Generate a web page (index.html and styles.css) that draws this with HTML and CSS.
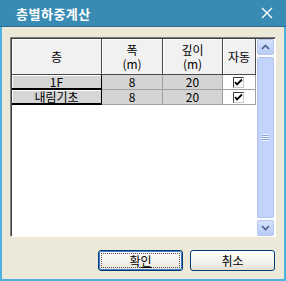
FILE: index.html
```html
<!DOCTYPE html>
<html>
<head>
<meta charset="utf-8">
<link rel="stylesheet" href="styles.css">
</head>
<body>
<div class="window">
  <div class="titlebar">
    <span class="title">층별하중계산</span>
    <svg class="close" width="12" height="12" viewBox="0 0 12 12"><path d="M1 1L11 11M11 1L1 11" stroke="#fff" stroke-width="1.4" fill="none"/></svg>
  </div>
  <div class="content">
    <div class="gridbox">
      <div class="table">
        <div class="hd">층</div>
        <div class="hd two"><span>폭</span><span>(m)</span></div>
        <div class="hd two"><span>깊이</span><span>(m)</span></div>
        <div class="hd">자동</div>

        <div class="rh">1F</div>
        <div class="cell">8</div>
        <div class="cell">20</div>
        <div class="cell chk"><span class="box"><svg width="9" height="9" viewBox="0 0 9 9"><path d="M1 4L3 6.5L8 1.5" stroke="#000" stroke-width="1.8" fill="none"/></svg></span></div>

        <div class="rh">내림기초</div>
        <div class="cell">8</div>
        <div class="cell">20</div>
        <div class="cell chk"><span class="box"><svg width="9" height="9" viewBox="0 0 9 9"><path d="M1 4L3 6.5L8 1.5" stroke="#000" stroke-width="1.8" fill="none"/></svg></span></div>
      </div>
      <div class="scroll">
        <div class="sbtn"><svg width="9" height="6" viewBox="0 0 9 6"><path d="M1 5L4.5 1.5L8 5" stroke="#4d6185" stroke-width="1.6" fill="none"/></svg></div>
        <div class="thumb"><span class="grip"></span></div>
        <div class="sbtn"><svg width="9" height="6" viewBox="0 0 9 6"><path d="M1 1L4.5 4.5L8 1" stroke="#4d6185" stroke-width="1.6" fill="none"/></svg></div>
      </div>
    </div>
    <div class="buttons">
      <button class="btn default"><span class="focus">확<u>인</u></span></button>
      <button class="btn">취소</button>
    </div>
  </div>
</div>
</body>
</html>
```
FILE: styles.css
```css
html, body {
  margin: 0;
  padding: 0;
  width: 286px;
  height: 281px;
  overflow: hidden;
  background: #ece9d8;
}
.window {
  width: 286px;
  height: 281px;
  box-sizing: border-box;
  display: flex;
  flex-direction: column;
  font-family: "Noto Sans CJK KR", "Noto Sans", sans-serif;
  font-size: 12px;
  color: #000;
}
.titlebar {
  height: 27px;
  flex: none;
  background: #3a8bb3;
  border-bottom: 1px solid #2c6e91;
  box-sizing: border-box;
  display: flex;
  align-items: center;
  justify-content: space-between;
  padding: 0 13px 0 16px;
}
.title {
  color: #fff;
  font-weight: bold;
  font-size: 13px;
  letter-spacing: 0.5px;
}
.close {
  display: block;
}
.content {
  flex: 1;
  background: #ece9d8;
  border-left: 2px solid #4cb3e0;
  border-right: 2px solid #4cb3e0;
  border-bottom: 2px solid #4cb3e0;
  padding: 10px 8px 0 8px;
  display: flex;
  flex-direction: column;
}
.gridbox {
  height: 200px;
  box-sizing: border-box;
  border-top: 1px solid #808080;
  border-left: 1px solid #808080;
  border-right: 1px solid #fff;
  border-bottom: 1px solid #fff;
  box-shadow: inset 1px 1px 0 #404040;
  padding: 1px 0 0 1px;
  background: #fff;
  display: flex;
  justify-content: space-between;
}
.table {
  display: grid;
  grid-template-columns: 90px 61px 60px 33px;
  grid-template-rows: 36px 15px 15px;
  align-self: flex-start;
}
.table > div {
  box-sizing: border-box;
  display: flex;
  align-items: center;
  justify-content: center;
  text-align: center;
  line-height: 14px;
}
.hd {
  background: #f1f1f1;
  border-right: 1px solid #4a4a4a;
  border-bottom: 1px solid #4a4a4a;
  box-shadow: inset 1px 1px 0 #fff;
}
.hd.two {
  flex-direction: column;
}
.hd.two span {
  display: block;
  height: 14px;
  line-height: 14px;
}
.rh {
  background: #d6d6d6;
  border-right: 1px solid #000;
  border-bottom: 2px solid #000;
  box-shadow: inset 1px 1px 0 #fff;
}
.cell {
  background: #d4d4d4;
  border-right: 1px solid #a0a0a0;
  border-bottom: 1px solid #a0a0a0;
}
.cell.chk {
  background: #fff;
  justify-content: flex-start;
  padding-left: 10px;
}
.box {
  width: 11px;
  height: 11px;
  box-sizing: border-box;
  border-top: 1px solid #404040;
  border-left: 1px solid #404040;
  border-right: 1px solid #ccc;
  border-bottom: 1px solid #ccc;
  background: #fff;
  display: flex;
  align-items: center;
  justify-content: center;
}
.box svg {
  display: block;
}
.scroll {
  width: 17px;
  margin-right: 1px;
  display: flex;
  flex-direction: column;
  gap: 1px;
  background: #fdfdfd;
}
.sbtn {
  height: 16px;
  box-sizing: border-box;
  border: 1px solid #b5c7ec;
  border-radius: 2px;
  background: linear-gradient(#d6e2fd, #b8cbf6);
  display: flex;
  align-items: center;
  justify-content: center;
}
.thumb {
  flex: 1;
  margin-top: 1px;
  margin-bottom: 1px;
  border: 1px solid #b2c4ec;
  border-radius: 2px;
  background: #c3d3fb;
  display: flex;
  align-items: center;
  justify-content: center;
}
.grip {
  width: 7px;
  height: 7px;
  background: repeating-linear-gradient(#eef3fe 0 1px, #8ca5dc 1px 2px);
}
.buttons {
  display: flex;
  justify-content: flex-end;
  gap: 7px;
  margin-top: 13px;
  padding-right: 1px;
}
.btn {
  width: 85px;
  height: 21px;
  box-sizing: border-box;
  border: 1px solid #003c74;
  border-radius: 3px;
  background: linear-gradient(#ffffff, #f3f2ec 60%, #e2dfd4);
  font-family: "Noto Sans CJK KR", "Noto Sans", sans-serif;
  font-size: 12px;
  color: #000;
  padding: 0;
  display: flex;
  align-items: center;
  justify-content: center;
}
.btn.default {
  box-shadow: inset 0 0 0 1px #4a7bd0;
  padding: 2px;
}
.focus {
  flex: 1;
  align-self: stretch;
  border: 1px dotted #555;
  display: flex;
  align-items: center;
  justify-content: center;
}
```
